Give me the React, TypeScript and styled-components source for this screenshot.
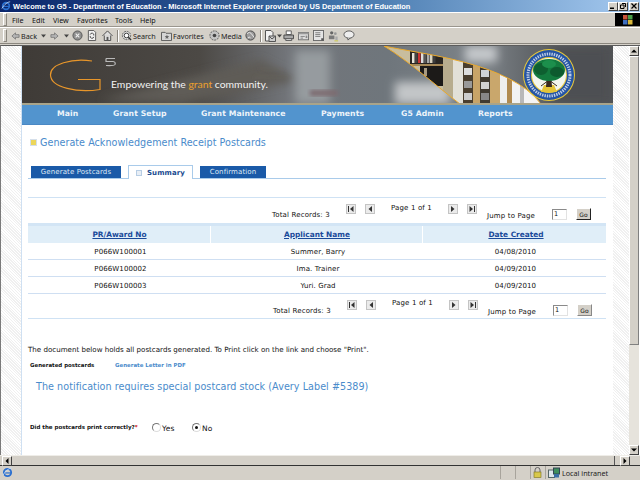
import styled, { createGlobalStyle } from "styled-components";

const GlobalStyle = createGlobalStyle`
  html, body {
    margin: 0;
    padding: 0;
    background: #d4d0c8;
    overflow: hidden;
  }
`;

const Win = styled.div`
  width: 640px;
  height: 480px;
  display: flex;
  flex-direction: column;
  overflow: hidden;
  background: #d4d0c8;
  font-family: "DejaVu Sans", Verdana, sans-serif;
`;

const TitleBar = styled.div`
  height: 12px;
  display: flex;
  align-items: center;
  background: linear-gradient(90deg, #0a246a 0%, #3a6ea5 50%, #a6caf0 100%);
  color: #fff;
  font: bold 7.45px "Liberation Sans", sans-serif;
  white-space: nowrap;
  padding-left: 1px;
  gap: 2px;
`;

const TitleText = styled.span`
  flex: 1;
`;

const WinButtons = styled.div`
  display: flex;
  margin-right: 1px;
`;

const WinButton = styled.div<{ $gap?: boolean }>`
  width: 10px;
  height: 9px;
  margin-left: ${(p) => (p.$gap ? "1px" : "0")};
  background: #d4d0c8;
  border: 1px solid;
  border-color: #fff #404040 #404040 #fff;
  box-sizing: border-box;
  color: #000;
  display: flex;
  align-items: center;
  justify-content: center;
`;

const MenuBar = styled.div`
  height: 15px;
  display: flex;
  align-items: center;
  border-top: 1px solid #fff;
  border-bottom: 1px solid #9a968e;
  box-sizing: border-box;
  font: 7.2px "Noto Sans", sans-serif;
  color: #111;
  padding-left: 3px;
`;

const Grip = styled.div<{ $gap: number }>`
  width: 2px;
  height: 11px;
  border: 1px solid;
  border-color: #fff #8a867e #8a867e #fff;
  margin-right: ${(p) => p.$gap}px;
`;

const MenuItem = styled.span<{ $w: number }>`
  width: ${(p) => p.$w}px;
`;

const Flag = styled.div`
  width: 25px;
  height: 13px;
  margin-left: auto;
  background: #000;
  display: flex;
  align-items: center;
  justify-content: center;
`;

const ToolBar = styled.div`
  height: 17px;
  display: flex;
  align-items: center;
  border-top: 1px solid #fff;
  border-bottom: 1px solid #8a867e;
  box-sizing: border-box;
  padding-left: 3px;
  font: 7.2px "Noto Sans", sans-serif;
  color: #222;
`;

const ToolSep = styled.div`
  width: 1px;
  height: 12px;
  background: #8a867e;
  border-right: 1px solid #fff;
  margin: 0 2px;
`;

const Tool = styled.div<{ $w: number }>`
  width: ${(p) => p.$w}px;
  display: flex;
  align-items: center;
  gap: 1px;
  flex: none;
`;

const Viewport = styled.div`
  height: 410px;
  margin-top: 1px;
  display: flex;
  border-top: 1px solid #5c5c5c;
  border-left: 1px solid #7a7a7a;
  box-sizing: border-box;
  background: #fff;
`;

const Hatch = styled.div<{ $w: number }>`
  width: ${(p) => p.$w}px;
  flex: none;
  background: repeating-linear-gradient(45deg, #f0f0f0 0 1px, #fff 1px 2px);
`;

const Page = styled.div`
  width: 591px;
  flex: none;
  background: #fff;
  border-left: 1px solid #cfe0f2;
  margin-left: -1px;
  color: #111;
`;

const Banner = styled.div`
  height: 59px;
  position: relative;
  overflow: hidden;
`;

const BannerArt = styled.svg`
  display: block;
`;

const Tagline = styled.div`
  position: absolute;
  left: 89px;
  top: 32px;
  color: #f2f2f2;
  font: 10.4px "Lato", "Liberation Sans", sans-serif;
  white-space: nowrap;
`;

const Grant = styled.span`
  color: #eda02d;
`;

const Nav = styled.div`
  height: 20px;
  background: #5294ce;
  border-bottom: 1px solid #4a88c4;
  box-sizing: border-box;
  display: flex;
  align-items: center;
  color: #eef4fa;
  font: bold 7.7px "DejaVu Sans", sans-serif;
  letter-spacing: 0.1px;
  padding-bottom: 2px;
`;

const NavItem = styled.span<{ $left?: number; $w: number }>`
  margin-left: ${(p) => p.$left ?? 0}px;
  width: ${(p) => p.$w}px;
  flex: none;
  white-space: nowrap;
`;

const Heading = styled.div`
  display: flex;
  align-items: center;
  gap: 3px;
  margin: 10px 0 0 8px;
  height: 14px;
  color: #4a8bcb;
  font: 9.6px "DejaVu Sans", sans-serif;
  letter-spacing: 0.03px;
`;

const HeadMark = styled.div`
  width: 5px;
  height: 5px;
  background: #ecd65a;
  border: 1px solid #d5dfea;
`;

const Tabs = styled.div`
  display: flex;
  margin: 13px 7px 0 6px;
  height: 16px;
  align-items: flex-end;
  border-bottom: 1px solid #a9cbea;
  padding-left: 3px;
`;

const Tab = styled.div<{ $w: number }>`
  width: ${(p) => p.$w}px;
  margin-right: 7px;
  height: 12px;
  box-sizing: border-box;
  background: #1a5aa8;
  color: #dfe9f5;
  font: 7px "DejaVu Sans", sans-serif;
  letter-spacing: 0.1px;
  display: flex;
  align-items: center;
  justify-content: center;
`;

const ActiveTab = styled(Tab)`
  height: 14px;
  background: #fff;
  color: #1a4a90;
  font-weight: bold;
  border: 1px solid #a9cbea;
  border-bottom: none;
  gap: 5px;
  margin-bottom: -1px;
`;

const TabMark = styled.div`
  width: 4px;
  height: 4px;
  background: #e8eef5;
  border: 1px solid #b7cde4;
`;

const Rule = styled.div<{ $top: number }>`
  height: 1px;
  background: #cfe2f4;
  margin: ${(p) => p.$top}px 7px 0 6px;
`;

const Pager = styled.div<{ $second?: boolean }>`
  height: ${(p) => (p.$second ? 24 : 25)}px;
  margin: 0 6px 0 ${(p) => (p.$second ? 7 : 6)}px;
  display: grid;
  grid-template-columns: 244px 74px 19px 16px 67px 19px 20px 65px 25px auto;
  font: 7px "DejaVu Sans", sans-serif;
  color: #111;
  letter-spacing: 0.15px;
`;

const PagerLabel = styled.span<{ $top?: number }>`
  margin-top: ${(p) => p.$top ?? 13}px;
  white-space: nowrap;
`;

const PageBtn = styled.div`
  width: 8px;
  height: 8px;
  margin-top: 6px;
  background: #ebebeb;
  border: 1px solid #c4c4c4;
  display: flex;
  align-items: center;
  justify-content: center;
`;

const PageLabel = styled.span<{ $second?: boolean }>`
  margin-top: ${(p) => (p.$second ? 5 : 6)}px;
  padding-left: 10px;
  white-space: nowrap;
`;

const JumpInput = styled.div`
  width: 15px;
  height: 11px;
  margin-top: 11px;
  box-sizing: border-box;
  border: 1px solid;
  border-color: #8a8a8a #e2e2e2 #e2e2e2 #8a8a8a;
  font: 6.5px "DejaVu Sans", sans-serif;
  padding-left: 1px;
`;

const GoBtn = styled.div<{ $dark?: boolean }>`
  width: 15px;
  height: 12px;
  margin-top: 10px;
  margin-left: -1px;
  box-sizing: border-box;
  background: #d4d0c8;
  border: 1px solid;
  border-color: #fff ${(p) => (p.$dark ? "#222 #222" : "#888 #888")} #fff;
  font: 6px "DejaVu Sans", sans-serif;
  display: flex;
  align-items: center;
  justify-content: center;
`;

const Table = styled.div`
  margin: 0 7px 0 6px;
`;

const HeadRow = styled.div`
  display: grid;
  grid-template-columns: 183px 212px 1fr;
  height: 20px;
  background: #e0eef8;
  border-top: 3px solid #d3e5f5;
  box-sizing: border-box;
`;

const HeadCell = styled.div<{ $last?: boolean }>`
  border-right: ${(p) => (p.$last ? "none" : "1px solid #fff")};
  display: flex;
  align-items: center;
  justify-content: center;
  color: #1a4a9a;
  font: bold 7.4px "DejaVu Sans", sans-serif;
  text-decoration: underline;
  padding-left: ${(p) => (p.$last ? 3 : 1)}px;
`;

const Row = styled.div`
  display: grid;
  grid-template-columns: 183px 212px 1fr;
  height: 17px;
  box-sizing: border-box;
  border-bottom: 1px solid #cfdff2;
`;

const Cell = styled.div`
  display: flex;
  align-items: center;
  justify-content: center;
  font: 7px "DejaVu Sans", sans-serif;
  letter-spacing: 0.1px;
  color: #111;
  padding: 1px 0 0 2px;
`;

const Note = styled.div`
  margin: 26px 0 0 6px;
  font: 7.1px "DejaVu Sans", sans-serif;
  color: #111;
  white-space: nowrap;
`;

const LinkRow = styled.div`
  display: flex;
  margin: 8px 0 0 8px;
  font: bold 5.45px "DejaVu Sans", sans-serif;
  white-space: nowrap;
`;

const LinkLabel = styled.span`
  width: 85px;
  color: #111;
`;

const PdfLink = styled.span`
  color: #4a8bcb;
`;

const Notice = styled.div`
  margin: 13px 0 0 14px;
  color: #4a8bcb;
  font: 9.6px "DejaVu Sans", sans-serif;
  letter-spacing: 0.05px;
  white-space: nowrap;
`;

const Question = styled.div`
  display: flex;
  align-items: center;
  margin: 29px 0 0 8px;
  font: bold 5.5px "DejaVu Sans", sans-serif;
  white-space: nowrap;
  height: 12px;
`;

const QuestionLabel = styled.span`
  width: 122px;
  flex: none;
`;

const Req = styled.span`
  color: #c00;
`;

const Radio = styled.div<{ $on?: boolean }>`
  width: 7px;
  height: 7px;
  border-radius: 50%;
  border: 1px solid;
  border-color: #777 #ddd #ddd #777;
  margin-right: 1px;
  background: #fff;
  display: flex;
  align-items: center;
  justify-content: center;
  flex: none;
  &::after {
    content: "";
    width: 3px;
    height: 3px;
    border-radius: 50%;
    background: ${(p) => (p.$on ? "#111" : "transparent")};
  }
`;

const RadioLabel = styled.span<{ $w: number }>`
  width: ${(p) => p.$w}px;
  font: 7.5px "DejaVu Sans", sans-serif;
  letter-spacing: 0.2px;
  padding-top: 2px;
`;

const VScroll = styled.div`
  width: 10px;
  flex: none;
  background: #e6e3dc;
  display: flex;
  flex-direction: column;
`;

const ScrollBtn = styled.div`
  width: 10px;
  height: 10px;
  flex: none;
  background: #d4d0c8;
  box-sizing: border-box;
  border: 1px solid;
  border-color: #fff #404040 #404040 #fff;
  display: flex;
  align-items: center;
  justify-content: center;
`;

const Thumb = styled.div`
  height: 289px;
  background: #d4d0c8;
  box-sizing: border-box;
  border: 1px solid;
  border-color: #fff #808080 #808080 #fff;
`;

const Filler = styled.div`
  flex: 1;
`;

const HScroll = styled.div`
  height: 11px;
  display: flex;
  background: #d4d0c8;
  border-top: 1px solid #efede8;
  border-bottom: 1px solid #333;
  box-sizing: border-box;
  padding-left: 2px;
`;

const HScrollTrack = styled.div`
  width: 603px;
  margin-right: 5px;
  box-sizing: border-box;
  background: #d4d0c8;
  border-right: 1px solid #555;
`;

const Status = styled.div`
  height: 13px;
  display: flex;
  align-items: center;
  padding-left: 2px;
  font: 7.2px "Noto Sans", sans-serif;
  color: #222;
`;

const StatusFill = styled.div`
  flex: 1;
  height: 100%;
`;

const StatusCell = styled.div<{ $w: number }>`
  width: ${(p) => p.$w}px;
  flex: none;
  height: 100%;
  box-sizing: border-box;
  border-left: 1px solid #a8a49c;
  display: flex;
  align-items: center;
  gap: 2px;
  padding-left: 2px;
  white-space: nowrap;
`;

const Ie = ({ size = 10 }: { size?: number }) => (
  <svg width={size} height={size} viewBox="0 0 12 12">
    <circle cx="6" cy="6" r="4" fill="none" stroke="#2a6fd0" strokeWidth="2" />
    <path d="M2 6.5h8" stroke="#2a6fd0" strokeWidth="1.3" />
    <path d="M1 9 C4 4 8 1 11 1" stroke="#c8dcf4" strokeWidth="1" fill="none" />
  </svg>
);

const G = "#6c6c6c";

const Arrow = ({ flip }: { flip?: boolean }) => (
  <svg width="9" height="10" viewBox="0 0 10 10" style={flip ? { transform: "scaleX(-1)" } : undefined}>
    <path d="M1 5 L5 1.5 V3.5 H9 V6.5 H5 V8.5 Z" fill="#b5b5b5" stroke={G} strokeWidth="0.8" />
  </svg>
);

const Caret = () => (
  <svg width="5" height="4" viewBox="0 0 5 4">
    <path d="M0 0.5 H5 L2.5 3.5 Z" fill="#444" />
  </svg>
);

const StopIcon = () => (
  <svg width="11" height="11" viewBox="0 0 12 12">
    <circle cx="6" cy="6" r="5" fill="#8f8f8f" stroke="#555" />
    <path d="M4 4 L8 8 M8 4 L4 8" stroke="#eee" strokeWidth="1.2" />
  </svg>
);

const RefreshIcon = () => (
  <svg width="10" height="11" viewBox="0 0 11 12">
    <path d="M1.5 .5 H7.5 L9.5 2.5 V11.5 H1.5 Z" fill="#f0f0f0" stroke="#555" />
    <path d="M3.5 5 A2 2 0 0 1 7.5 6 M7.5 7.5 A2 2 0 0 1 3.5 6.5" stroke="#444" fill="none" />
  </svg>
);

const HomeIcon = () => (
  <svg width="11" height="11" viewBox="0 0 12 12">
    <path d="M.5 6.5 L6 1 L11.5 6.5 M2.5 6 V11.5 H9.5 V6" fill="#ddd" stroke="#444" />
    <rect x="5" y="7.5" width="2" height="4" fill="#555" />
  </svg>
);

const SearchIcon = () => (
  <svg width="11" height="11" viewBox="0 0 12 12">
    <circle cx="6" cy="6" r="4.5" fill="#d8d8d8" stroke="#555" strokeDasharray="2 1" />
    <circle cx="6" cy="6" r="2.5" fill="#fff" stroke="#333" />
    <path d="M8 8 L11 11" stroke="#333" strokeWidth="1.5" />
  </svg>
);

const FavIcon = () => (
  <svg width="11" height="10" viewBox="0 0 12 11">
    <path d="M.5 1.5 H4.5 L5.5 2.5 H11.5 V10.5 H.5 Z" fill="#d5d5d5" stroke="#555" />
    <path d="M6.5 4 L7.2 5.6 L9 5.8 L7.7 7 L8 8.7 L6.5 7.8 L5 8.7 L5.3 7 L4 5.8 L5.8 5.6 Z" fill="#666" />
  </svg>
);

const MediaIcon = () => (
  <svg width="11" height="11" viewBox="0 0 12 12">
    <circle cx="6" cy="6" r="5" fill="#c4c4c4" stroke="#555" strokeDasharray="2 1" />
    <circle cx="6" cy="6" r="2" fill="#444" />
  </svg>
);

const HistoryIcon = () => (
  <svg width="11" height="11" viewBox="0 0 12 12">
    <circle cx="6" cy="6" r="5" fill="#9a9a9a" stroke="#444" />
    <path d="M2 4 Q5 1 7 4 T10 8 M3 9 Q5 6 6 9" stroke="#eee" fill="none" />
  </svg>
);

const MailIcon = () => (
  <svg width="12" height="12" viewBox="0 0 12 12">
    <path d="M1.5 .5 H7 L9 2.5 V11 H1.5 Z" fill="#f2f2f2" stroke="#555" />
    <path d="M5 6 H11.5 V11.5 H5 Z" fill="#ccc" stroke="#555" />
    <path d="M5 6 L8 9 L11.5 6" fill="none" stroke="#555" />
  </svg>
);

const PrintIcon = () => (
  <svg width="11" height="11" viewBox="0 0 12 12">
    <path d="M3.5 1 H9 V5 H3.5 Z" fill="#fff" stroke="#555" />
    <path d="M1 5.5 H11.5 V9.5 H1 Z" fill="#a9a9a9" stroke="#444" />
    <path d="M3 9.5 H9.5 V11.5 H3 Z" fill="#e6e6e6" stroke="#555" />
  </svg>
);

const EditIcon = () => (
  <svg width="11" height="10" viewBox="0 0 13 11">
    <rect x=".5" y="1.5" width="12" height="8.5" fill="#ddd" stroke="#666" />
    <rect x=".5" y="1.5" width="12" height="2" fill="#999" />
    <path d="M3 6 H8 M3 8 H6" stroke="#777" />
    <rect x="9" y="5" width="2" height="3" fill="#888" />
  </svg>
);

const DocIcon = () => (
  <svg width="11" height="11" viewBox="0 0 12 12">
    <rect x=".5" y=".5" width="11" height="11" fill="#e4e4e4" stroke="#666" />
    <path d="M2.5 3 H8 M2.5 5 H8 M2.5 7 H8" stroke="#777" />
    <rect x="9" y="9" width="2.5" height="2.5" fill="#555" />
  </svg>
);

const PeopleIcon = () => (
  <svg width="11" height="12" viewBox="0 0 12 13">
    <circle cx="4" cy="3" r="1.8" fill="#666" />
    <path d="M1 10 V6 H7 V10 Z" fill="#7a7a7a" />
    <circle cx="8" cy="4" r="1.5" fill="#999" />
    <path d="M6 11 H8 V7 H10.5 V11 Z" fill="#aaa" />
    <rect x="7" y="11" width="4" height="1.5" fill="#cfcb6a" />
  </svg>
);

const BubbleIcon = () => (
  <svg width="12" height="11" viewBox="0 0 13 12">
    <ellipse cx="6.5" cy="5" rx="5.5" ry="4" fill="#eee" stroke="#555" />
    <path d="M5 8.5 L5.5 11 L8 8.5" fill="#ddd" stroke="#555" />
  </svg>
);

const FirstGlyph = () => (
  <svg width="6" height="6" viewBox="0 0 6 6">
    <path d="M.5 0 V6" stroke="#333" />
    <path d="M5.5 0 V6 L2 3 Z" fill="#333" />
  </svg>
);
const PrevGlyph = () => (
  <svg width="6" height="6" viewBox="0 0 6 6">
    <path d="M5 0 V6 L1.5 3 Z" fill="#333" />
  </svg>
);
const NextGlyph = () => (
  <svg width="6" height="6" viewBox="0 0 6 6">
    <path d="M1 0 V6 L4.5 3 Z" fill="#333" />
  </svg>
);
const LastGlyph = () => (
  <svg width="6" height="6" viewBox="0 0 6 6">
    <path d="M.5 0 V6 L4 3 Z" fill="#333" />
    <path d="M5.5 0 V6" stroke="#333" />
  </svg>
);

const ScrollArrow = ({ d }: { d: string }) => (
  <svg width="6" height="6" viewBox="0 0 6 6">
    <path d={d} fill="#000" />
  </svg>
);

const LockIcon = () => (
  <svg width="9" height="11" viewBox="0 0 9 11">
    <path d="M2 5 V3 A2.5 2.5 0 0 1 7 3 V5" fill="none" stroke="#666" />
    <rect x="1" y="5" width="7" height="5.5" fill="#d8c84a" stroke="#7a6f1c" strokeWidth=".6" />
  </svg>
);

const IntranetIcon = () => (
  <svg width="12" height="11" viewBox="0 0 12 11">
    <rect x=".5" y="3" width="6" height="7.5" fill="#dfe6ec" stroke="#566" />
    <rect x="5.5" y="1" width="6" height="6" fill="#3f8f5f" stroke="#345" />
    <rect x="6" y="7" width="5" height="3.5" fill="#3a6ea5" />
  </svg>
);

const topBooks = ["#e8e4d8", "#444", "#c33", "#ddd", "#555", "#aaa", "#d9d3c0", "#3c3c3c"];

// library photo strips, left to right: x, width, colour, top of the strip
const strips: [number, number, string, number][] = [
  [443, 10, "#b7ac8e", 52],
  [453, 10, "#e2e0d8", 52],
  [463, 10, "#4a3e2e", 60],
  [473, 7, "#c8a468", 60],
  [480, 10, "#403a30", 62],
  [490, 10, "#c9a76c", 66],
  [500, 7, "#eeeeee", 70],
  [507, 5, "#b08a50", 74],
  [512, 8, "#f2f2f2", 78],
  [520, 4, "#b8b8b8", 82],
  [524, 22, "#f4f4f4", 84],
];

const shelfBooks: [number, number, number, string][] = [
  [464, 68, 8, "#dddddd"],
  [464, 81, 8, "#999999"],
  [464, 93, 8, "#cccccc"],
  [481, 70, 8, "#cfd4d8"],
  [481, 82, 8, "#d0d0d0"],
  [481, 93, 8, "#888888"],
];

function BannerPicture() {
  return (
    <BannerArt width="591" height="59" viewBox="22 46 591 59">
      <defs>
        <linearGradient id="bg" x1="0" x2="1" y1="0" y2="0">
          <stop offset="0" stopColor="#3f3b37" />
          <stop offset="0.3" stopColor="#4c4945" />
          <stop offset="0.45" stopColor="#72757a" />
          <stop offset="0.62" stopColor="#6f767c" />
          <stop offset="0.78" stopColor="#7d8388" />
          <stop offset="0.86" stopColor="#62666a" />
          <stop offset="1" stopColor="#515355" />
        </linearGradient>
        <filter id="soft"><feGaussianBlur stdDeviation="5" /></filter>
        <filter id="softer"><feGaussianBlur stdDeviation="2" /></filter>
        <clipPath id="lib">
          <path d="M384 46 C420 54 510 62 541 104 H460 C435 85 410 62 384 46 Z" />
        </clipPath>
      </defs>
      <rect x="22" y="46" width="591" height="58" fill="url(#bg)" />
      <g filter="url(#soft)">
        <path d="M100 100 L260 60 L300 80 L180 104 Z" fill="#5f5c56" />
        <rect x="295" y="50" width="35" height="54" fill="#969b9f" />
        <rect x="395" y="82" width="55" height="22" fill="#c3c6c8" />
        <rect x="465" y="46" width="32" height="16" fill="#c6c9cc" />
        <rect x="550" y="46" width="60" height="58" fill="#4d5053" />
      </g>
      <path d="M260 68 H282 M255 78 H290" stroke="#6d6a60" strokeWidth="1" filter="url(#softer)" />
      <rect x="310" y="90" width="28" height="6" fill="#7d6a70" filter="url(#softer)" />
      <g clipPath="url(#lib)">
        <rect x="384" y="46" width="165" height="58" fill="#c8bd9e" />
        <rect x="410" y="50" width="33" height="14" fill="#2a2622" />
        {topBooks.map((c, i) => (
          <rect key={i} x={412 + i * 3} y="53" width="2.5" height="10" fill={c} />
        ))}
        <rect x="410" y="64" width="33" height="2" fill="#a88a58" />
        <rect x="420" y="66" width="23" height="20" fill="#1c1a18" />
        <rect x="424" y="68" width="3" height="8" fill="#a89a80" />
        {strips.map(([x, w, c, y]) => (
          <rect key={x} x={x} y={y} width={w} height={104 - y} fill={c} />
        ))}
        {shelfBooks.map(([x, y, w, c]) => (
          <rect key={`${x}-${y}`} x={x} y={y} width={w} height="7" fill={c} />
        ))}
      </g>
      <path d="M384 46 C420 54 510 62 541 104" fill="none" stroke="#eaa92c" />
      <path d="M384 46 C410 62 435 85 460 104" fill="none" stroke="#eaa92c" />
      <path
        d="M92 61 C72 58 50 64 50.5 75 C51 88 78 93 100 89.5 V79.5 H78"
        fill="none"
        stroke="#e8962a"
        strokeWidth="1.2"
      />
      <path d="M106 58.5 H115 M106 58.5 V61.5 H113 Q116 62 115 64.5 Q114 66 106 65.5" fill="none" stroke="#b9b9b9" strokeWidth="1.2" />
      <circle cx="549" cy="75" r="26" fill="#e9c93a" />
      <circle cx="549" cy="75" r="25" fill="#2454a4" />
      <circle cx="549" cy="75" r="21" fill="none" stroke="#e4ebf6" strokeWidth="3" strokeDasharray="1.4 1" opacity=".8" />
      <circle cx="549" cy="75" r="18" fill="#e9c93a" />
      <circle cx="549" cy="75" r="17" fill="#f4f6ee" />
      <path d="M541 92 H557 L554 85 H544 Z" fill="#e4c43a" />
      <path d="M547 74 H551 L552 87 H546 Z" fill="#3a2a1e" />
      <path d="M549 80 L541 86 M549 80 L557 86" stroke="#3a2a1e" />
      <ellipse cx="549" cy="70" rx="16" ry="11" fill="#137a3e" />
      <ellipse cx="541" cy="69" rx="7" ry="6" fill="#0e5f30" />
      <ellipse cx="557" cy="72" rx="7" ry="5" fill="#0d5a2e" />
      <ellipse cx="549" cy="64" rx="7" ry="4" fill="#1c8f4c" />
      <rect x="22" y="103" width="591" height="2" fill="#a9a48a" />
    </BannerArt>
  );
}

function PagerBar({ second }: { second?: boolean }) {
  return (
    <Pager $second={second}>
      <span />
      <PagerLabel>Total Records: 3</PagerLabel>
      <PageBtn><FirstGlyph /></PageBtn>
      <PageBtn><PrevGlyph /></PageBtn>
      <PageLabel $second={second}>Page 1 of 1</PageLabel>
      <PageBtn><NextGlyph /></PageBtn>
      <PageBtn><LastGlyph /></PageBtn>
      <PagerLabel $top={14}>Jump to Page</PagerLabel>
      <JumpInput>1</JumpInput>
      <GoBtn $dark={!second}>Go</GoBtn>
    </Pager>
  );
}

const rows = [
  ["P066W100001", "Summer, Barry", "04/08/2010"],
  ["P066W100002", "Ima. Trainer", "04/09/2010"],
  ["P066W100003", "Yuri. Grad", "04/09/2010"],
];

export default function App() {
  return (
    <Win>
      <GlobalStyle />
      <TitleBar>
        <Ie />
        <TitleText>Welcome to G5 - Department of Education - Microsoft Internet Explorer provided by US Department of Education</TitleText>
        <WinButtons>
          <WinButton>
            <svg width="6" height="6" viewBox="0 0 6 6"><rect x="0" y="4.5" width="4" height="1.5" /></svg>
          </WinButton>
          <WinButton>
            <svg width="6" height="6" viewBox="0 0 6 6"><path d="M2 .5H5.5V4M.5 2H4V5.5H.5Z" fill="none" stroke="#000" /></svg>
          </WinButton>
          <WinButton $gap>
            <svg width="6" height="6" viewBox="0 0 6 6"><path d="M.5 .5L5.5 5.5M5.5 .5L.5 5.5" stroke="#000" strokeWidth="1.2" /></svg>
          </WinButton>
        </WinButtons>
      </TitleBar>
      <MenuBar>
        <Grip $gap={5} />
        <MenuItem $w={20}>File</MenuItem>
        <MenuItem $w={21}>Edit</MenuItem>
        <MenuItem $w={24}>View</MenuItem>
        <MenuItem $w={38}>Favorites</MenuItem>
        <MenuItem $w={25}>Tools</MenuItem>
        <MenuItem $w={20}>Help</MenuItem>
        <Flag>
          <svg width="10" height="10" viewBox="0 0 10 10">
            <rect x="0" y="0" width="4.5" height="4.5" fill="#c8553a" />
            <rect x="5" y="0" width="4.5" height="4.5" fill="#4aa04a" />
            <rect x="0" y="5" width="4.5" height="4.5" fill="#3f6fc0" />
            <rect x="5" y="5" width="4.5" height="4.5" fill="#d8b83a" />
          </svg>
        </Flag>
      </MenuBar>
      <ToolBar>
        <Grip $gap={4} />
        <Tool $w={30}><Arrow />Back</Tool>
        <Tool $w={9}><Caret /></Tool>
        <Tool $w={14}><Arrow flip /></Tool>
        <Tool $w={8}><Caret /></Tool>
        <Tool $w={15}><StopIcon /></Tool>
        <Tool $w={15}><RefreshIcon /></Tool>
        <Tool $w={13}><HomeIcon /></Tool>
        <ToolSep />
        <Tool $w={40}><SearchIcon />Search</Tool>
        <Tool $w={48}><FavIcon />Favorites</Tool>
        <Tool $w={36}><MediaIcon />Media</Tool>
        <Tool $w={13}><HistoryIcon /></Tool>
        <ToolSep />
        <Tool $w={19}><MailIcon /><Caret /></Tool>
        <Tool $w={15}><PrintIcon /></Tool>
        <Tool $w={15}><EditIcon /></Tool>
        <Tool $w={15}><DocIcon /></Tool>
        <Tool $w={15}><PeopleIcon /></Tool>
        <Tool $w={15}><BubbleIcon /></Tool>
      </ToolBar>
      <Viewport>
        <Hatch $w={21} />
        <Page>
          <Banner>
            <BannerPicture />
            <Tagline>Empowering the <Grant>grant</Grant> community.</Tagline>
          </Banner>
          <Nav>
            <NavItem $left={35} $w={56}>Main</NavItem>
            <NavItem $w={88}>Grant Setup</NavItem>
            <NavItem $w={120}>Grant Maintenance</NavItem>
            <NavItem $w={80}>Payments</NavItem>
            <NavItem $w={77}>G5 Admin</NavItem>
            <NavItem $w={60}>Reports</NavItem>
          </Nav>
          <Heading>
            <HeadMark />
            Generate Acknowledgement Receipt Postcards
          </Heading>
          <Tabs>
            <Tab $w={90}>Generate Postcards</Tab>
            <ActiveTab $w={65}><TabMark />Summary</ActiveTab>
            <Tab $w={66}>Confirmation</Tab>
          </Tabs>
          <Rule $top={18} />
          <PagerBar />
          <Table>
            <HeadRow>
              <HeadCell>PR/Award No</HeadCell>
              <HeadCell>Applicant Name</HeadCell>
              <HeadCell $last>Date Created</HeadCell>
            </HeadRow>
            {rows.map((r) => (
              <Row key={r[0]}>
                {r.map((c) => (
                  <Cell key={c}>{c}</Cell>
                ))}
              </Row>
            ))}
          </Table>
          <PagerBar second />
          <Rule $top={0} />
          <Note>The document below holds all postcards generated. To Print click on the link and choose "Print".</Note>
          <LinkRow>
            <LinkLabel>Generated postcards</LinkLabel>
            <PdfLink>Generate Letter in PDF</PdfLink>
          </LinkRow>
          <Notice>The notification requires special postcard stock (Avery Label #5389)</Notice>
          <Question>
            <QuestionLabel>Did the postcards print correctly?<Req>*</Req></QuestionLabel>
            <Radio /><RadioLabel $w={30}>Yes</RadioLabel>
            <Radio $on /><RadioLabel $w={30}>No</RadioLabel>
          </Question>
        </Page>
        <Hatch $w={16} />
        <VScroll>
          <ScrollBtn><ScrollArrow d="M0 4.5 H6 L3 1.5 Z" /></ScrollBtn>
          <Thumb />
          <Filler />
          <ScrollBtn><ScrollArrow d="M0 1.5 H6 L3 4.5 Z" /></ScrollBtn>
        </VScroll>
      </Viewport>
      <HScroll>
        <ScrollBtn><ScrollArrow d="M4.5 0 V6 L1.5 3 Z" /></ScrollBtn>
        <HScrollTrack />
        <ScrollBtn><ScrollArrow d="M1.5 0 V6 L4.5 3 Z" /></ScrollBtn>
      </HScroll>
      <Status>
        <Ie size={11} />
        <StatusFill />
        <StatusCell $w={15} />
        <StatusCell $w={15} />
        <StatusCell $w={15}><LockIcon /></StatusCell>
        <StatusCell $w={95}><IntranetIcon />Local intranet</StatusCell>
      </Status>
    </Win>
  );
}
